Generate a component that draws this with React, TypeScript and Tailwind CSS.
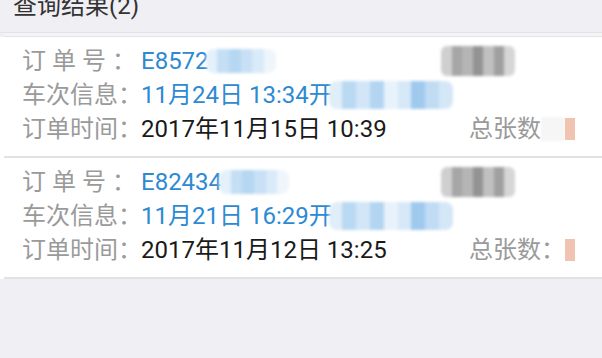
const font = { fontFamily: '"Roboto", "Noto Sans CJK SC", sans-serif' };

function Mosaic({ cells, className }: { cells: string[]; className: string }) {
  return (
    <div className={`flex overflow-hidden blur-[1.5px] ${className}`}>
      {cells.map((c, i) => (
        <div key={i} className="flex-1" style={{ background: c }} />
      ))}
    </div>
  );
}

interface Order {
  no: string;
  train: string;
  time: string;
  countColon: boolean;
}

const orders: Order[] = [
  { no: 'E8572', train: '11月24日 13:34开', time: '2017年11月15日 10:39', countColon: false },
  { no: 'E82434', train: '11月21日 16:29开', time: '2017年11月12日 13:25', countColon: true },
];

function OrderCard({ order }: { order: Order }) {
  return (
    <div className="bg-white">
      <div className="pt-[7px] pb-[10px] pl-[22px] pr-[27px] text-[24px] leading-[34px] whitespace-nowrap">
        <div className="flex items-center">
          <span className="w-[119px] shrink-0 tracking-[6px] text-[#9a9a9a]">订单号：</span>
          <span className="text-[#2d8ad2]">{order.no}</span>
          <Mosaic
            className="ml-[-3px] h-[24px] w-[70px] rounded-[8px]"
            cells={['#e4f0fa', '#c4def4', '#b6d7f2', '#c8e0f5', '#d9eaf8', '#eef5fb']}
          />
          <Mosaic
            className="ml-auto mr-[60px] h-[30px] w-[74px] rounded-[6px]"
            cells={['#cfcfcf', '#a6a6a6', '#b5b5b5', '#939393', '#c0c0c0', '#a0a0a0', '#d6d6d6']}
          />
        </div>
        <div className="flex items-center">
          <span className="w-[119px] shrink-0 text-[#9a9a9a]">车次信息：</span>
          <span className="text-[#2d8ad2]">{order.train}</span>
          <Mosaic
            className="ml-[-4px] h-[28px] w-[124px] rounded-[8px]"
            cells={['#e0eef9', '#b9d9f2', '#d2e6f7', '#b3d5f1', '#e8f2fb', '#d6e8f7', '#9fcaee', '#c0dcf3', '#d4e7f7']}
          />
        </div>
        <div className="flex items-center">
          <span className="w-[119px] shrink-0 text-[#9a9a9a]">订单时间：</span>
          <span className="text-[#1a1a1a]">{order.time}</span>
          <span className="ml-auto text-[#9a9a9a]">{order.countColon ? '总张数：' : '总张数'}</span>
          {!order.countColon && <div className="h-[24px] w-[24px] bg-[#f6f6f6] blur-[1px]" />}
          <div className="h-[22px] w-[10px] bg-[#f0c4b0] blur-[0.5px]" />
        </div>
      </div>
      <div className="ml-[4px] h-[2px] bg-[#e2e2e4]" />
    </div>
  );
}

export default function App() {
  return (
    <div className="w-[602px] h-[358px] overflow-hidden bg-[#efeff4]" style={font}>
      <div className="flex h-[33px] flex-col pl-[13px] border-b border-[#e4e4e8]">
        <div className="mt-[-11px] text-[24px] leading-[34px] text-[#333333] whitespace-nowrap">查询结果(2)</div>
      </div>
      <div className="ml-[4px] h-[4px] bg-[#f4f4f6] border-b border-[#e2e2e4]" />
      {orders.map((o) => (
        <OrderCard key={o.no} order={o} />
      ))}
    </div>
  );
}
